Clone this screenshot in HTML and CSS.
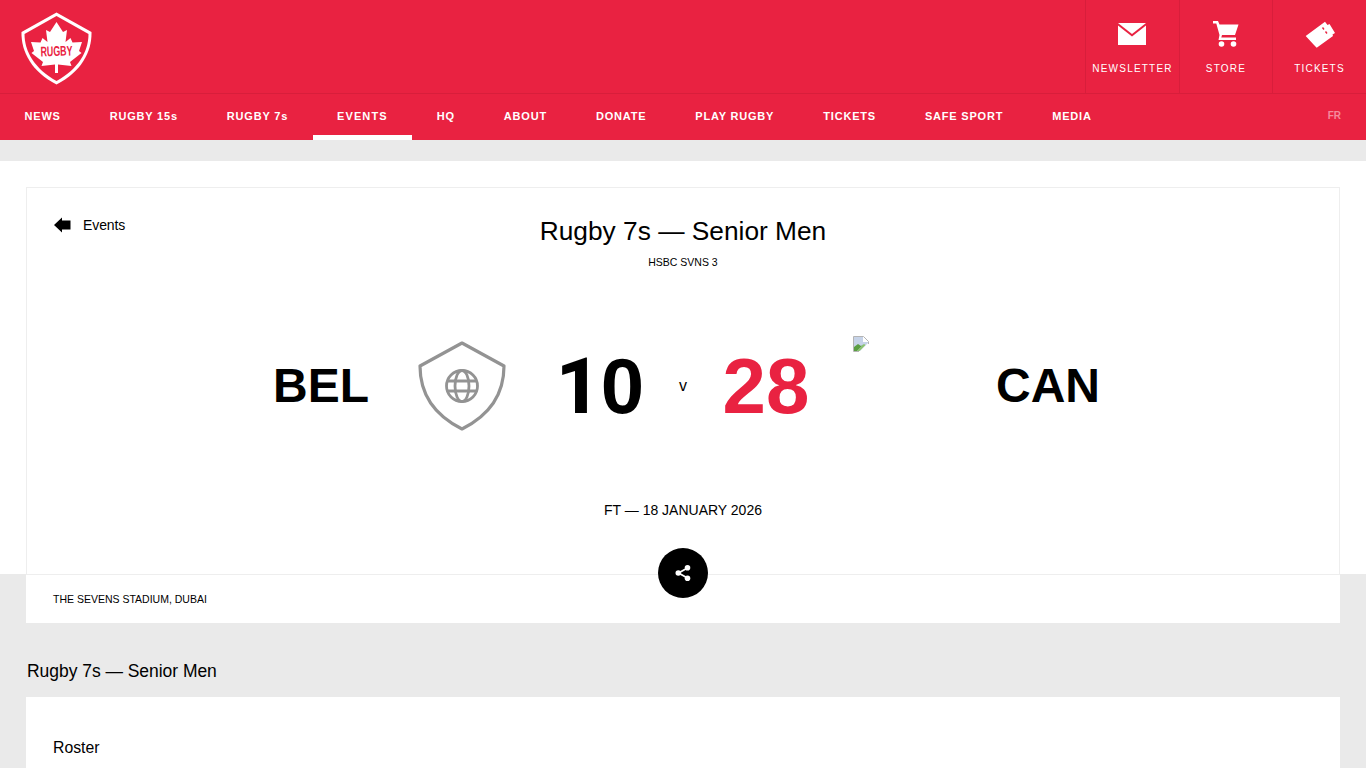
FILE: index.html
```html
<!DOCTYPE html>
<html lang="en">
<head>
<meta charset="utf-8">
<title>Rugby Canada</title>
<link rel="stylesheet" href="styles.css">
</head>
<body>
<header class="site-header">
  <div class="top-bar">
    <a class="logo" href="#">
      <svg width="73" height="74" viewBox="0 0 73 74">
        <path d="M36.500 1.500 L71.500 21 C72 41 61 61 36.500 73.500 C12 61 1 41 1.500 21 Z" fill="#fff"/>
        <path d="M36.500 5 L68.500 23 C68.500 41 58 58 36.500 70 C15 58 4.500 41 4.500 23 Z" fill="#e92241"/>
        <path d="M36.500 11 L43 21 L47 19 L45.500 31 L50.500 27 L52.500 31.500 L62 31 L59 40 L61.500 42 L50 51 L51.500 55 L38 53.500 V62 H35 V53.500 L21.500 55 L23 51 L11.500 42 L14 40 L11 31 L20.500 31.500 L22.500 27 L27.500 31 L26 19 L30 21 Z" fill="#fff"/>
        <text x="36.500" y="45" class="logo-text" text-anchor="middle" textLength="32" lengthAdjust="spacingAndGlyphs" transform="rotate(-2 36.500 40)">RUGBY</text>
      </svg>
    </a>
    <div class="utilities">
      <a class="utility util-wide util-news" href="#">
        <svg width="30" height="24" viewBox="0 0 30 24"><path d="M1 1 H29 L15 12 Z" fill="#fff"/><path d="M1 3.500 L15 14.500 L29 3.500 V23 H1 Z" fill="#fff"/></svg>
        <span>NEWSLETTER</span>
      </a>
      <a class="utility util-store" href="#">
        <svg width="30" height="26" viewBox="0 0 30 26"><path d="M2 0 H7 L8.500 3.500 H27.500 L24 14 H11 L10.300 16.500 H25 V19 H7.500 L8.500 14 L5.300 2.500 H2 Z" fill="#fff"/><circle cx="10.500" cy="23" r="2.800" fill="#fff"/><circle cx="22.500" cy="23" r="2.800" fill="#fff"/></svg>
        <span>STORE</span>
      </a>
      <a class="utility util-wide util-tickets" href="#">
        <svg width="30" height="28" viewBox="0 0 30 28"><path d="M0.700 15 L20 0.700 L22.500 4 L24.500 3 L30 12 L27.500 13.500 L28 15 L11.700 26.700 L9 24 Z" fill="#fff"/><path d="M17.500 6.500 L19 8.500 M20.500 10.500 L22 12.500" stroke="#e92241" stroke-width="1.400"/></svg>
        <span>TICKETS</span>
      </a>
    </div>
  </div>
  <nav class="main-nav">
    <a href="#">NEWS</a>
    <a href="#">RUGBY 15s</a>
    <a href="#">RUGBY 7s</a>
    <a href="#" class="active">EVENTS</a>
    <a href="#">HQ</a>
    <a href="#">ABOUT</a>
    <a href="#">DONATE</a>
    <a href="#">PLAY RUGBY</a>
    <a href="#">TICKETS</a>
    <a href="#">SAFE SPORT</a>
    <a href="#">MEDIA</a>
    <a href="#" class="lang">FR</a>
  </nav>
</header>

<main class="page">
  <section class="match-band">
    <div class="match-card">
      <a class="back" href="#">
        <svg width="17" height="16" viewBox="0 0 17 16"><path d="M0 8 L8 0.500 V3.500 H16.500 V12.500 H8 V15.500 Z" fill="#000"/></svg>
        <span>Events</span>
      </a>
      <h1 class="match-title">Rugby 7s — Senior Men</h1>
      <p class="match-sub">HSBC SVNS 3</p>
      <div class="score-row">
        <div class="team team-home">BEL</div>
        <div class="crest">
          <svg width="90" height="90" viewBox="0 0 90 90">
            <path d="M45 2 L87 25 C87 52 73 74 45 88 C17 74 3 52 3 25 Z" fill="none" stroke="#939393" stroke-width="3.200" stroke-linejoin="round"/>
            <g fill="none" stroke="#939393" stroke-width="2.800">
              <circle cx="45" cy="45" r="15.500"/>
              <ellipse cx="45" cy="45" rx="7" ry="15.500"/>
              <path d="M30.500 40 H59.500 M30.500 50 H59.500"/>
            </g>
          </svg>
        </div>
        <div class="score score-home"><span class="digit-one">1</span>0</div>
        <div class="versus">v</div>
        <div class="score score-win">28</div>
        <div class="crest-broken">
          <svg width="16" height="16" viewBox="0 0 16 16">
            <path d="M0.500 15.500 V0.500 H10.500 L15.500 5.500 V8" fill="none" stroke="#b4b4b4"/>
            <path d="M0.500 15.500 H6" fill="none" stroke="#b4b4b4"/>
            <path d="M1 1 H10 V6 H15 V7 L7 15 H1 Z" fill="#c6d3e8"/>
            <path d="M1 15 V11 L5 8 L8 10 L11 8 L4 15 Z" fill="#5a9e42"/>
            <path d="M4 15 L11 8 L12.500 9 L6.500 15 Z" fill="#8cc46c"/>
          </svg>
        </div>
        <div class="team team-away">CAN</div>
      </div>
      <p class="match-date">FT — 18 JANUARY 2026</p>
    </div>
  </section>
  <div class="venue-wrap">
    <div class="venue">
      <a class="share" href="#">
        <svg width="18" height="18" viewBox="0 0 18 18"><path d="M13.500 4 L4.500 9 L13.500 14" fill="none" stroke="#fff" stroke-width="1.800"/><circle cx="13.500" cy="3.800" r="2.800" fill="#fff"/><circle cx="4.300" cy="9" r="2.800" fill="#fff"/><circle cx="13.500" cy="14.200" r="2.800" fill="#fff"/></svg>
      </a>
      <span>THE SEVENS STADIUM, DUBAI</span>
    </div>
    <h2 class="section-title">Rugby 7s — Senior Men</h2>
    <div class="roster"><h3>Roster</h3></div>
  </div>
</main>
</body>
</html>
```
FILE: styles.css
```css
* { box-sizing: border-box; }
html, body { margin: 0; padding: 0; }
body {
  height: 768px;
  overflow: hidden;
  background: #eaeaea;
  color: #000;
  font-family: "Liberation Sans", Arial, sans-serif;
}
a { color: inherit; text-decoration: none; }
.site-header { background: #e92241; color: #fff; }
.top-bar {
  height: 94px;
  display: flex;
  justify-content: space-between;
  border-bottom: 1px solid #d81e3b;
}
.logo { display: block; padding: 11px 0 0 20px; }
.logo svg { display: block; }
.logo-text { font: bold 14px "Liberation Sans", Arial, sans-serif; fill: #e92241; }
.utilities { display: flex; }
.utility {
  position: relative;
  width: 93px;
  height: 93px;
  border-left: 1px solid #d81e3b;
  display: flex;
  flex-direction: column;
  align-items: center;
  padding-top: 21px;
  font-size: 10px;
  letter-spacing: 1.200px;
  white-space: nowrap;
}
.util-wide { width: 94px; }
.util-news { padding-top: 22px; }
.utility svg { display: block; }
.util-news svg { margin-right: 2px; }
.utility span { position: absolute; top: 63px; }
.main-nav {
  height: 46px;
  display: flex;
  font-size: 11px;
  font-weight: bold;
  letter-spacing: 0.800px;
}
.main-nav a {
  height: 46px;
  padding: 0 24.500px;
  line-height: 44px;
  white-space: nowrap;
}
.main-nav a.active { border-bottom: 5px solid #fff; letter-spacing: 1.100px; }
.main-nav a.lang {
  margin-left: auto;
  padding: 0 25px 0 0;
  font-size: 10px;
  letter-spacing: 0;
  color: #f58a9c;
}
.match-band {
  margin-top: 21px;
  height: 413px;
  background: #fff;
  padding: 26px 26px 0;
}
.match-card {
  position: relative;
  height: 387px;
  border: 1px solid #eeeeee;
  border-bottom: 0;
  text-align: center;
}
.back {
  position: absolute;
  left: 27px;
  top: 29px;
  display: flex;
  align-items: center;
  gap: 12px;
  font-size: 14px;
  line-height: 16px;
  letter-spacing: -0.100px;
}
.back svg { display: block; }
.match-title {
  margin: 0;
  padding-top: 27px;
  font-size: 26.300px;
  line-height: 32px;
  font-weight: normal;
}
.match-sub {
  margin: 8px 0 0;
  font-size: 10.500px;
  line-height: 14px;
}
.score-row {
  display: grid;
  grid-template-columns: 390px 90px 43px 100px 66px 100px 37px 16px 358px 1fr;
  margin-top: 22px;
  height: 190px;
  align-items: center;
  text-align: center;
}
.team { font-size: 48px; font-weight: bold; line-height: 1; }
.team-home { grid-column: 1; text-align: right; padding-right: 48px; }
.crest { grid-column: 2; }
.crest svg { display: block; }
.score { font-size: 78px; font-weight: bold; line-height: 1; }
.digit-one { font-family: Roboto, "Liberation Sans", sans-serif; font-weight: 800; }
.score-home { grid-column: 4; }
.versus { grid-column: 5; font-size: 16px; }
.score-win { grid-column: 6; color: #e92241; }
.crest-broken { grid-column: 8; align-self: start; padding-top: 45px; }
.crest-broken svg { display: block; }
.team-away { grid-column: 9; }
.match-date { margin: 0; padding-top: 20px; font-size: 14px; line-height: 18px; }
.venue-wrap { padding: 0 26px; }
.venue {
  position: relative;
  height: 49px;
  background: #fff;
  border-top: 1px solid #eeeeee;
  padding-left: 27px;
  font-size: 10.500px;
  line-height: 48px;
}
.share {
  position: absolute;
  left: 632px;
  top: -27px;
  width: 50px;
  height: 50px;
  border-radius: 50%;
  background: #000;
  display: flex;
  align-items: center;
  justify-content: center;
}
.section-title {
  margin: 0;
  padding: 37px 0 15px 1px;
  font-size: 17.500px;
  line-height: 22px;
  font-weight: normal;
  letter-spacing: -0.040px;
}
.roster { background: #fff; padding: 42px 27px 0; height: 71px; }
.roster h3 { margin: 0; font-size: 15.800px; line-height: 18px; font-weight: normal; }
```
